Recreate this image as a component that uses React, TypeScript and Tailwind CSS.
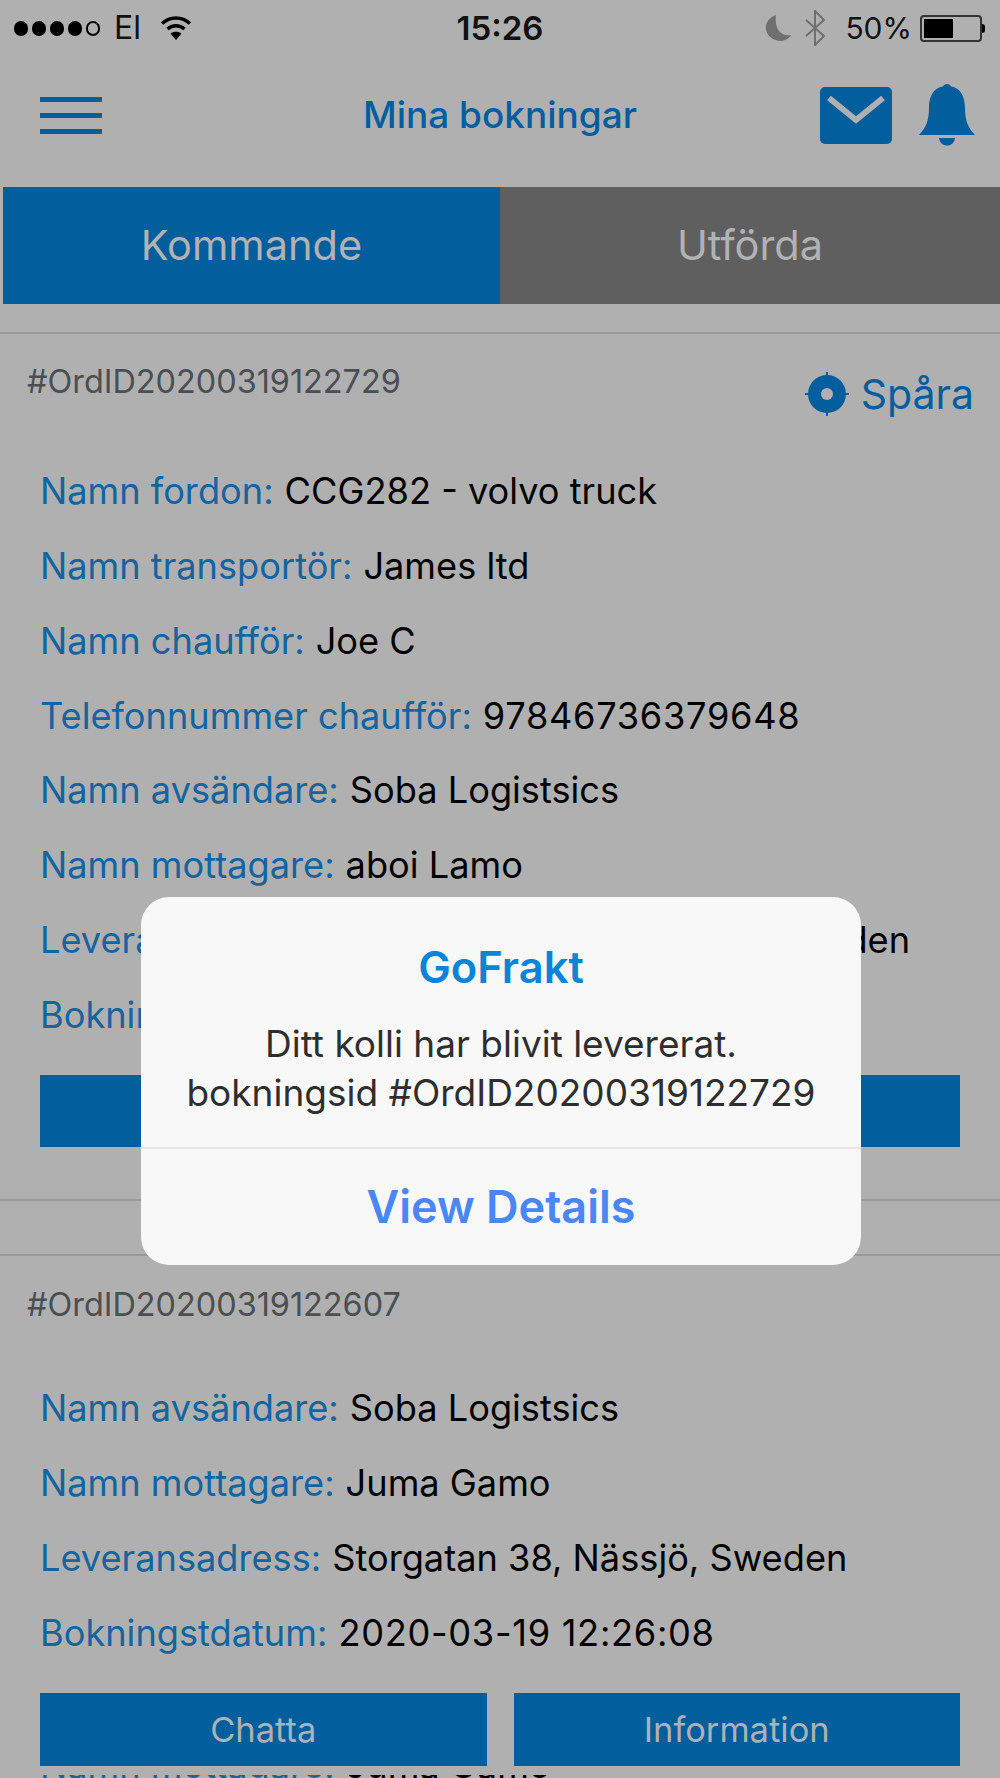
import React from "react";

const FONT = "font-['Inter','Liberation_Sans',sans-serif]";

function Row({
  label,
  value,
  className = "",
  valueClass = "",
}: {
  label: string;
  value: string;
  className?: string;
  valueClass?: string;
}) {
  return (
    <div className={`h-[74.8px] flex items-center whitespace-nowrap text-[36.2px] px-[40px] ${className}`}>
      <span className="text-[#14649f]">{label}</span>
      <span className={`text-black ml-[11px] ${valueClass}`}>{value}</span>
    </div>
  );
}

function ActionButton({ label, className }: { label: string; className: string }) {
  return (
    <div className={`h-[73px] bg-[#025e9c] flex items-center justify-center text-[#adb1b5] text-[34.5px] ${className}`}>
      {label}
    </div>
  );
}

function StatusBar() {
  return (
    <div className="h-[56px] relative flex items-center pl-[14px] pr-[15px] text-[#111]">
      <div className="flex items-center gap-[4px]">
        {[0, 1, 2, 3].map((i) => (
          <span key={i} className="w-[14px] h-[15px] rounded-full bg-black" />
        ))}
        <span className="w-[14px] h-[15px] rounded-full border-2 border-black" />
      </div>
      <span className="ml-[14px] text-[32px] leading-none">El</span>
      <svg className="ml-[19px]" width="32" height="26" viewBox="0 0 32 26" fill="none" stroke="black" strokeWidth="3.5">
        <path d="M2 8.5 C10 1 22 1 30 8.5" />
        <path d="M7.5 14 C12 9.5 20 9.5 24.5 14" />
        <path d="M16 25 L10.5 18.5 C13.5 16 18.5 16 21.5 18.5 Z" fill="black" stroke="none" />
      </svg>
      <span className="absolute left-0 right-0 text-center text-[33px] font-semibold leading-none">15:26</span>
      <div className="ml-auto flex items-center">
        <svg width="26" height="26" viewBox="0 0 26 26" fill="#6f6f6f">
          <path d="M11 0 C3 3 0 9 1 15 C3 23 12 28 20 25 C23 24 25 22 26 20 C17 22 9 15 11 0 Z" />
        </svg>
        <svg className="ml-[13px]" width="23" height="36" viewBox="0 0 23 36" fill="none" stroke="#6f6f6f" strokeWidth="2">
          <path d="M2 10 L20 26 L11 35 L11 1 L20 10 L2 26" />
        </svg>
        <span className="ml-[18px] text-[30px] leading-none">50%</span>
        <div className="ml-[8px] flex items-center">
          <div className="w-[62px] h-[27px] rounded-[4px] border-2 border-[#333] p-[2px]">
            <div className="w-[29px] h-full bg-black" />
          </div>
          <span className="w-[3px] h-[9px] bg-black rounded-r-sm" />
        </div>
      </div>
    </div>
  );
}

function NavBar() {
  return (
    <div className="h-[131px] relative flex items-center pl-[40px] pr-[25px] pb-[13px]">
      <div className="flex flex-col gap-[11px] w-[62px]">
        <span className="h-[5px] bg-[#025e9c]" />
        <span className="h-[5px] bg-[#025e9c]" />
        <span className="h-[5px] bg-[#025e9c]" />
      </div>
      <span className="absolute left-0 right-0 text-center text-[#025e9c] text-[37px] font-medium">Mina bokningar</span>
      <div className="ml-auto flex items-center gap-[27px]">
        <div className="w-[72px] h-[57px] rounded-[5px] bg-[#025e9c] flex items-start justify-center pt-[8px]">
          <svg width="60" height="30" viewBox="0 0 60 30" fill="none" stroke="#b0b0b0" strokeWidth="6">
            <path d="M3 3 L30 25 L57 3" />
          </svg>
        </div>
        <svg width="56" height="62" viewBox="0 0 56 62" fill="#025e9c">
          <circle cx="28" cy="4" r="4" />
          <path d="M28 2 C15 2 10 12 10 24 C10 36 7 44 0 51 L56 51 C49 44 46 36 46 24 C46 12 41 2 28 2 Z" />
          <path d="M20 54 L36 54 C35 64 21 64 20 54 Z" />
        </svg>
      </div>
    </div>
  );
}

function Tabs() {
  return (
    <div className="h-[117px] flex pl-[3px] text-[41.5px] text-[#b0b2b4]">
      <div className="w-[497px] bg-[#025e9c] flex items-center justify-center">Kommande</div>
      <div className="flex-1 bg-[#5f5f5f] flex items-center justify-center">Utförda</div>
    </div>
  );
}

function TrackIcon() {
  return (
    <svg width="44" height="44" viewBox="0 0 44 44">
      <circle cx="22" cy="22" r="19" fill="#025e9c" />
      <circle cx="22" cy="22" r="6" fill="#b0b0b0" />
      <path d="M22 0 V8 M22 36 V44 M0 22 H8 M36 22 H44" stroke="#025e9c" strokeWidth="2" />
    </svg>
  );
}

function Alert() {
  return (
    <div className="absolute left-[141px] top-[897px] w-[720px] h-[368px] rounded-[28px] bg-[#f8f8f9] flex flex-col text-center">
      <div className="h-[252px] border-b-2 border-[#e6e6e8] flex flex-col items-center">
        <div className="mt-[45px] text-[#0a84d8] text-[43.5px] leading-[50px] font-semibold">GoFrakt</div>
        <div className="mt-[28px] text-[#2e2e2e] text-[37px] leading-[48.7px] whitespace-nowrap">
          Ditt kolli har blivit levererat.
          <br />
          bokningsid #OrdID20200319122729
        </div>
      </div>
      <div className="flex-1 flex items-center justify-center text-[#4a86f5] text-[45px] font-semibold">
        View Details
      </div>
    </div>
  );
}

export default function App() {
  return (
    <div className={`relative w-[1000px] h-[1778px] overflow-hidden bg-[#b0b0b0] ${FONT}`}>
      <StatusBar />
      <NavBar />
      <Tabs />
      <div className="mt-[28px] border-t-2 border-[#999]" />

      <div className="h-[867px] border-b-2 border-[#999]">
        <div className="h-[120px] flex items-start justify-between pl-[27px] pr-[26px] pt-[28px]">
          <span className="text-[#4a4f54] text-[32.4px] leading-[40px]">#OrdID20200319122729</span>
          <div className="flex items-center gap-[12px] pt-[10px] text-[#025e9c] text-[41px] leading-[44px]">
            <TrackIcon />
            <span>Spåra</span>
          </div>
        </div>
        <Row label="Namn fordon:" value="CCG282 - volvo truck" />
        <Row label="Namn transportör:" value="James ltd" />
        <Row label="Namn chaufför:" value="Joe C" />
        <Row label="Telefonnummer chaufför:" value="97846736379648" valueClass="tracking-[0.7px]" />
        <Row label="Namn avsändare:" value="Soba Logistsics" />
        <Row label="Namn mottagare:" value="aboi Lamo" />
        <Row label="Leveransadress:" value="Storgatan 38, Jönköping, Sweden" />
        <Row label="Bokningstdatum:" value="2020-03-19 12:27:29" valueClass="tracking-[0.7px]" />
        <div className="mx-[40px] mt-[23px] h-[72px] bg-[#025e9c]" />
      </div>

      <div className="h-[55px] border-b-2 border-[#999]" />

      <div className="h-[115px] pl-[27px] pt-[29px]">
        <span className="text-[#4a4f54] text-[32.4px] leading-[40px]">#OrdID20200319122607</span>
      </div>
      <Row label="Namn avsändare:" value="Soba Logistsics" />
      <Row label="Namn mottagare:" value="Juma Gamo" />
      <Row label="Leveransadress:" value="Storgatan 38, Nässjö, Sweden" />
      <Row label="Bokningstdatum:" value="2020-03-19 12:26:08" valueClass="tracking-[0.7px]" />
      {/* the next booking scrolls under this block, only its baseline peeks out */}
      <div className="relative z-10 flex gap-[27px] px-[40px] mt-[23px] pb-[9px] bg-[#b0b0b0]">
        <ActionButton label="Chatta" className="flex-1" />
        <ActionButton label="Information" className="flex-1" />
      </div>
      <Row label="Namn mottagare:" value="Juma Gamo" className="-mt-[47px]" />

      <Alert />
    </div>
  );
}
